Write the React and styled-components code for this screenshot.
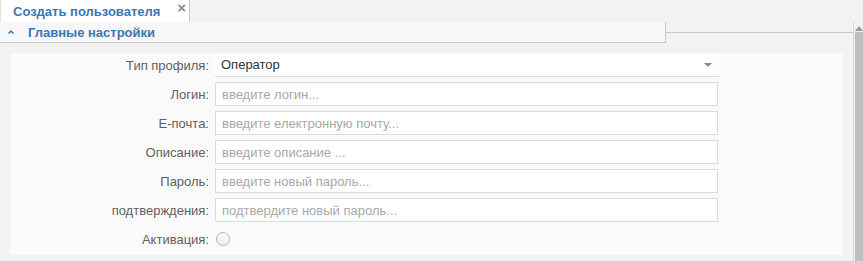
import styled, { createGlobalStyle } from 'styled-components';

const GlobalStyle = createGlobalStyle`
  body {
    margin: 0;
    background: #f2f2f2;
    font-family: 'Liberation Sans', Arial, sans-serif;
    font-size: 13px;
  }
`;

const fields = [
  { label: 'Логин:', placeholder: 'введите логин...' },
  { label: 'E-почта:', placeholder: 'введите електронную почту...' },
  { label: 'Описание:', placeholder: 'введите описание ...' },
  { label: 'Пароль:', placeholder: 'введите новый пароль...' },
  { label: 'подтверждения:', placeholder: 'подтвердите новый пароль...' },
];

const App = () => {
  return (
    <>
      <GlobalStyle />
      <Page>
        <TabBar>
          <Tab>
            <TabTitle>Создать пользователя</TabTitle>
            <Close>×</Close>
          </Tab>
        </TabBar>
        <Body>
          <Main>
            <HeaderRow>
              <SectionHeader>
                <Chevron viewBox="0 0 10 10">
                  <path d="M2.5 6.5 L5 4 L7.5 6.5" fill="none" stroke="#3a78b5" strokeWidth="1.5" />
                </Chevron>
                <SectionTitle>Главные настройки</SectionTitle>
              </SectionHeader>
              <HeaderFiller />
            </HeaderRow>
            <Panel>
              <Row>
                <Label>Тип профиля:</Label>
                <Select>
                  <span>Оператор</span>
                  <Caret />
                </Select>
              </Row>
              {fields.map(f => (
                <Row key={f.label}>
                  <Label>{f.label}</Label>
                  <Input placeholder={f.placeholder} />
                </Row>
              ))}
              <Row>
                <Label>Активация:</Label>
                <Radio />
              </Row>
            </Panel>
          </Main>
          <Scrollbar>
            <ScrollArrow />
          </Scrollbar>
        </Body>
      </Page>
    </>
  );
};

const Page = styled.div`
  width: 863px;
  height: 261px;
  overflow: hidden;
  display: flex;
  flex-direction: column;
`;

const TabBar = styled.div`
  height: 22px;
  display: flex;
`;

const Tab = styled.div`
  width: 190px;
  background: #fff;
  border-right: 1px solid #c8c8c8;
  border-left: 1px solid #e2e2e2;
  display: flex;
  align-items: center;
  justify-content: space-between;
  padding: 0 3px 0 12px;
  box-sizing: border-box;
`;

const TabTitle = styled.span`
  color: #3a78b5;
  font-weight: bold;
  font-size: 13px;
`;

const Close = styled.span`
  color: #8a8a8a;
  font-weight: bold;
  font-size: 15px;
  line-height: 1;
  margin-top: -7px;
`;

const Body = styled.div`
  flex: 1;
  display: flex;
`;

const Main = styled.div`
  flex: 1;
  display: flex;
  flex-direction: column;
  border-right: 1px solid #d6d6d6;
  margin-right: 1px;
`;

const HeaderRow = styled.div`
  display: flex;
  align-items: flex-start;
`;

const SectionHeader = styled.div`
  width: 666px;
  height: 21px;
  box-sizing: border-box;
  background: #f7f7f7;
  border-bottom: 1px solid #c9c9c9;
  border-right: 1px solid #c9c9c9;
  display: flex;
  align-items: center;
  padding-left: 6px;
`;

const Chevron = styled.svg`
  width: 10px;
  height: 10px;
  margin-right: 12px;
`;

const SectionTitle = styled.span`
  color: #3a78b5;
  font-weight: bold;
  font-size: 13px;
`;

const HeaderFiller = styled.div`
  flex: 1;
  height: 10px;
  border-bottom: 1px solid #c9c9c9;
`;

const Panel = styled.div`
  margin: 10px 10px 0 10px;
  background: #fafafa;
  height: 202px;
  display: flex;
  flex-direction: column;
  gap: 5px;
`;

const Row = styled.div`
  display: flex;
  align-items: center;
  gap: 6px;
  min-height: 24px;
`;

const Label = styled.label`
  width: 199px;
  text-align: right;
  color: #5f5f5f;
  font-size: 13px;
`;

const Select = styled.div`
  width: 504px;
  height: 23px;
  box-sizing: border-box;
  background: #fff;
  border-bottom: 1px solid #d3dde8;
  display: flex;
  align-items: center;
  justify-content: space-between;
  padding: 0 7px 0 6px;
  color: #333;
`;

const Caret = styled.span`
  width: 0;
  height: 0;
  border-left: 4px solid transparent;
  border-right: 4px solid transparent;
  border-top: 4px solid #888;
`;

const Input = styled.input`
  width: 503px;
  height: 24px;
  box-sizing: border-box;
  border: 1px solid #d3dde8;
  background: #fff;
  padding: 0 6px;
  font-family: 'Liberation Sans', Arial, sans-serif;
  font-size: 13px;
  color: #333;
  outline: none;
  &::placeholder {
    color: #a8a8a8;
  }
`;

const Radio = styled.span`
  width: 14px;
  height: 14px;
  border-radius: 50%;
  border: 1px solid #b5b5b5;
  background: linear-gradient(#fff, #ececec);
  box-sizing: border-box;
  margin-left: 1px;
`;

const Scrollbar = styled.div`
  width: 8px;
  margin-top: 10px;
  background: #bdbdbd;
  position: relative;
`;

const ScrollArrow = styled.span`
  position: absolute;
  top: -6px;
  left: 0;
  width: 0;
  height: 0;
  border-left: 4px solid transparent;
  border-right: 4px solid transparent;
  border-bottom: 5px solid #999;
`;

export default App;
